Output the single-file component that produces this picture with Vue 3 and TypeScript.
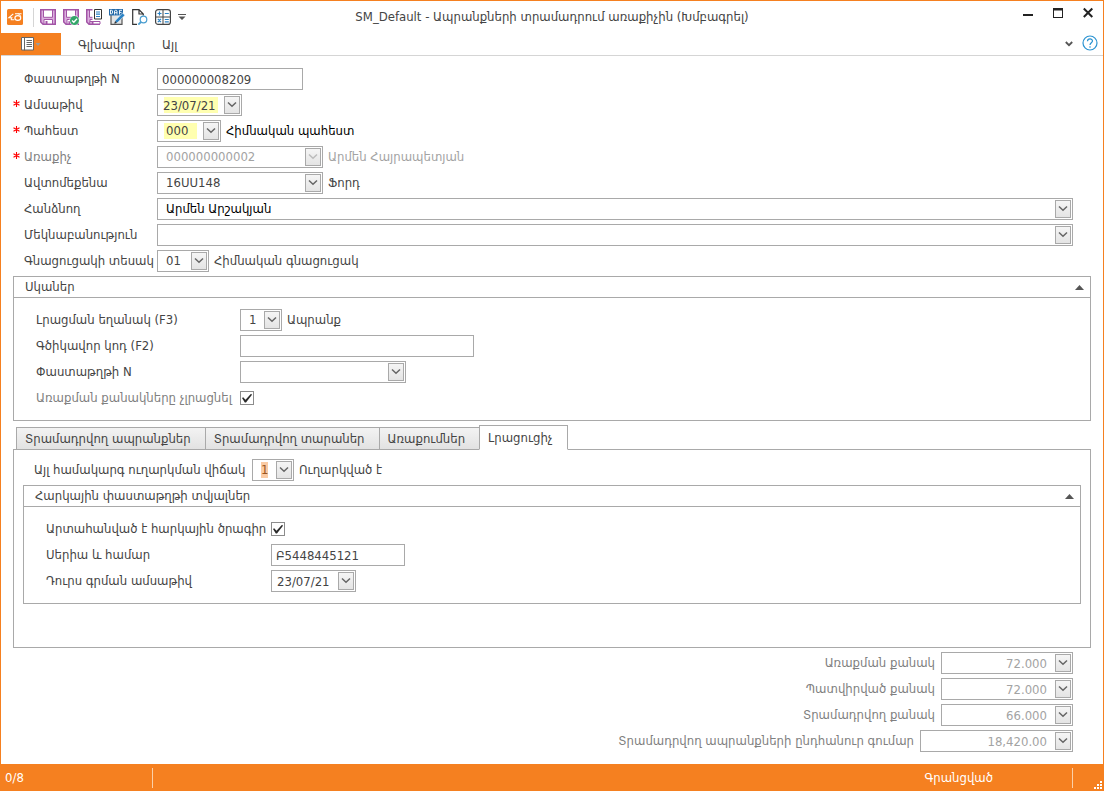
<script setup lang="ts">
import { ref } from 'vue'

type Kind = 'text' | 'date' | 'select' | 'check'

interface Field {
  id: string
  label: string
  kind: Kind
  value: string
  size: string
  note?: string
  required?: boolean
  disabled?: boolean
  marked?: boolean
  strong?: boolean
}

interface Total {
  id: string
  label: string
  value: string
  size: string
}

const mainFields: Field[] = [
  { id: 'doc', label: 'Փաստաթղթի N', kind: 'text', value: '000000008209', size: 'doc' },
  { id: 'date', label: 'Ամսաթիվ', kind: 'date', value: '23/07/21', size: 'date', required: true, marked: true },
  { id: 'store', label: 'Պահեստ', kind: 'select', value: '000', size: 'store', note: 'Հիմնական պահեստ', required: true, marked: true, strong: true },
  { id: 'carrier', label: 'Առաքիչ', kind: 'select', value: '000000000002', size: 'code', note: 'Արմեն Հայրապետյան', required: true, disabled: true },
  { id: 'car', label: 'Ավտոմեքենա', kind: 'select', value: '16ՍՍ148', size: 'code', note: 'Ֆորդ' },
  { id: 'giver', label: 'Հանձնող', kind: 'select', value: 'Արմեն Արշակյան', size: 'wide', strong: true },
  { id: 'comment', label: 'Մեկնաբանություն', kind: 'select', value: '', size: 'wide' },
  { id: 'price', label: 'Գնացուցակի տեսակ', kind: 'select', value: '01', size: 'price', note: 'Հիմնական գնացուցակ' },
]

const scanFields: Field[] = [
  { id: 'fill', label: 'Լրացման եղանակ (F3)', kind: 'select', value: '1', size: 'digit', note: 'Ապրանք' },
  { id: 'barcode', label: 'Գծիկավոր կոդ (F2)', kind: 'text', value: '', size: 'barcode' },
  { id: 'scandoc', label: 'Փաստաթղթի N', kind: 'select', value: '', size: 'code' },
  { id: 'nofill', label: 'Առաքման քանակները չլրացնել', kind: 'check', value: '', size: 'check', disabled: true },
]

const taxFields: Field[] = [
  { id: 'exported', label: 'Արտահանված է հարկային ծրագիր', kind: 'check', value: '', size: 'check' },
  { id: 'serial', label: 'Սերիա և համար', kind: 'text', value: 'Բ5448445121', size: 'serial' },
  { id: 'taxdate', label: 'Դուրս գրման ամսաթիվ', kind: 'date', value: '23/07/21', size: 'date' },
]

const totals: Total[] = [
  { id: 'shipped', label: 'Առաքման քանակ', value: '72.000', size: 'qty' },
  { id: 'ordered', label: 'Պատվիրված քանակ', value: '72.000', size: 'qty' },
  { id: 'given', label: 'Տրամադրվող քանակ', value: '66.000', size: 'qty' },
  { id: 'sum', label: 'Տրամադրվող ապրանքների ընդհանուր գումար', value: '18,420.00', size: 'sum' },
]

const tabs = ['Տրամադրվող ապրանքներ', 'Տրամադրվող տարաներ', 'Առաքումներ', 'Լրացուցիչ']
const activeTab = ref(3)
</script>

<template>
  <div class="window">
    <svg class="defs" aria-hidden="true">
      <symbol id="chevron" viewBox="0 0 14 16">
        <path d="M3 5.500 7 9.300 11 5.500" fill="none" stroke="currentColor" stroke-width="1.500" />
      </symbol>
      <symbol id="floppy" viewBox="0 0 16 16">
        <path d="M.75.75h14.500v14.500H3L.75 13z" fill="#dcb0df" stroke="#a254a6" stroke-width="1.500" />
        <path d="M3.500 1h9v7.300h-9z" fill="#fff" stroke="#a254a6" />
        <path d="M4 10.500h8.500V15H4z" fill="#fff" stroke="#a254a6" />
        <path d="M5.500 12h2v3h-2z" fill="#a254a6" />
      </symbol>
    </svg>

    <header class="titlebar">
      <div class="tools">
        <svg class="logo" viewBox="0 0 16 16" aria-hidden="true">
          <rect width="16" height="16" rx="1.500" fill="#f58020" />
          <path d="M6.300 4.800 1.800 8.800H5.500M4.300 8.800v2h3M8 4.800h6.500" fill="none" stroke="#fff" stroke-width="1.100" />
          <ellipse cx="10.800" cy="9" rx="2.900" ry="2.300" fill="none" stroke="#fff" stroke-width="1.200" />
          <path d="M10.800 4.800c1.500.2 2.600 1.200 3 2.700" fill="none" stroke="#fff" stroke-width=".8" />
        </svg>
        <span class="rule"></span>
        <button type="button" class="tool" aria-label="Save">
          <svg viewBox="0 0 16 16"><use href="#floppy" /></svg>
        </button>
        <button type="button" class="tool" aria-label="Save and confirm">
          <svg viewBox="0 0 16 16">
            <use href="#floppy" />
            <circle cx="11.500" cy="11.500" r="5" fill="#fff" />
            <circle cx="11.500" cy="11.500" r="4.500" fill="#35a56a" />
            <path d="m9 11.500 1.800 1.800 3.200-3.600" fill="none" stroke="#fff" stroke-width="1.300" />
          </svg>
        </button>
        <button type="button" class="tool" aria-label="Save as document">
          <svg viewBox="0 0 16 16">
            <use href="#floppy" />
            <path d="M6.500 0H16v16h-2v-4H6.500z" fill="#fff" />
            <path d="M8.500.500h7v9.500h-7z" fill="#fff" stroke="#333" />
            <path d="M10 3h4M10 5.200h4M10 7.500h4" stroke="#2b82c4" stroke-width="1.200" />
            <path d="M4 12.500h10V15H4z" fill="#fff" stroke="#a254a6" />
            <path d="M5.500 12.500h2V15h-2z" fill="#a254a6" />
          </svg>
        </button>
        <button type="button" class="tool" aria-label="Edit DAF">
          <svg viewBox="0 0 16 16">
            <path d="M2 6v9.300h11V8" fill="#e4e4e4" stroke="#555" stroke-width="1.200" />
            <path d="M0 0h14v6.500H0z" fill="#2469a8" />
            <path d="M1.500 1v4h1l1-1V2l-1-1zM5.500 5.500V2l.8-.8h1L8 2v3.500M5.500 3.700H8M10.500 5.500V1.300H13M10.500 3.400h2" fill="none" stroke="#fff" stroke-width=".9" />
            <path d="m5.500 14.500 1-3.200L13.500 4 16 6.300 8.700 13.500z" fill="#2b82c4" stroke="#fff" stroke-width=".6" />
            <path d="m5.200 14.800.9-2.800 1.900 1.900z" fill="#333" />
          </svg>
        </button>
        <button type="button" class="tool" aria-label="Preview">
          <svg viewBox="0 0 16 16">
            <path d="M5 15.300H.7V.7H7l4.300 4.300v1.500M7 .7V5h4.300" fill="none" stroke="#333" stroke-width="1.200" />
            <circle cx="11.500" cy="10.500" r="3.300" fill="#fff" stroke="#4a9ed0" stroke-width="1.200" />
            <path d="m9 13-2.700 2.600" stroke="#4a9ed0" stroke-width="1.800" />
          </svg>
        </button>
        <button type="button" class="tool" aria-label="Calculator">
          <svg viewBox="0 0 16 16">
            <rect x=".6" y=".6" width="14.800" height="14.800" rx="2.500" fill="#fff" stroke="#444" stroke-width="1.200" />
            <path d="M8 1v14M1 8h14" stroke="#444" />
            <path d="M2.500 4.500h4M4.500 2.500v4M9.800 4.500h4M2.800 9.800l3.200 3.400M6 9.800l-3.200 3.400M9.800 10.500h4M9.800 12.800h4" stroke="#2b82c4" stroke-width="1.200" />
          </svg>
        </button>
        <button type="button" class="tool more" aria-label="Customize">
          <svg viewBox="0 0 8 6"><path d="M0 0h8v1H0zM.500 2.500h7L4 6z" fill="#555" /></svg>
        </button>
      </div>
      <h1 class="title">SM_Default - Ապրանքների տրամադրում առաքիչին (Խմբագրել)</h1>
      <div class="caption">
        <button type="button" aria-label="Minimize">
          <svg viewBox="0 0 12 12"><path d="M1 7h10v2H1z" fill="#222" /></svg>
        </button>
        <button type="button" aria-label="Maximize">
          <svg viewBox="0 0 12 12"><path d="M1 1h10v10H1zM2 3.500V10h8V3.500z" fill="#222" fill-rule="evenodd" /></svg>
        </button>
        <button type="button" aria-label="Close">
          <svg viewBox="0 0 12 12"><path d="m1.800 1.500 8.500 8.500M10.300 1.500 1.800 10" stroke="#222" stroke-width="2" /></svg>
        </button>
      </div>
    </header>

    <nav class="ribbon">
      <button type="button" class="app-menu" aria-label="Menu">
        <svg viewBox="0 0 20 14">
          <path d="M.5.5h12v12.500H.5z" fill="#fff" stroke="#666" />
          <path d="M3.500 0v13.500" stroke="#666" />
          <path d="M5.500 3.500h5.500M5.500 5.500h5.500M5.500 7.500h5.500M5.500 9.500h5.500" stroke="#666" />
          <path d="M14.500 6h5l-2.500 3z" fill="#9c9c9c" />
        </svg>
      </button>
      <a class="ribbon-link" href="#main">Գլխավոր</a>
      <a class="ribbon-link" href="#other">Այլ</a>
      <button type="button" class="collapse" aria-label="Collapse ribbon">
        <svg viewBox="0 0 8 8"><path d="M.8 2 4 5.200 7.200 2" fill="none" stroke="#555" stroke-width="1.800" /></svg>
      </button>
      <button type="button" class="help" aria-label="Help">
        <svg viewBox="0 0 16 16">
          <circle cx="8" cy="8" r="7" fill="none" stroke="#2b93d1" stroke-width="1.200" />
          <path d="M5.500 6.200C5.500 3.200 10.500 3.200 10.500 6c0 1.700-2.500 1.900-2.500 4M8 11.300v1.500" fill="none" stroke="#2b93d1" stroke-width="1.200" />
        </svg>
      </button>
    </nav>

    <main class="body">
      <section class="rows main-rows">
        <div v-for="f in mainFields" :key="f.id" class="row" :class="{ disabled: f.disabled, strong: f.strong }">
          <span class="star">
            <svg v-if="f.required" viewBox="0 0 7 7"><path d="M3.500 0v7M.5 1.700l6 3.600M6.500 1.700l-6 3.600" stroke="#f00" stroke-width="1.100" /></svg>
          </span>
          <label class="label" :for="f.id">{{ f.label }}</label>
          <div class="box" :class="[f.size, f.kind]">
            <select v-if="f.kind === 'select'" :id="f.id" :class="{ marked: f.marked }" :disabled="f.disabled">
              <option>{{ f.value }}</option>
            </select>
            <input v-else :id="f.id" type="text" :class="{ marked: f.marked }" :value="f.value" />
            <span v-if="f.kind === 'select'" class="arrow"><svg><use href="#chevron" /></svg></span>
            <button v-if="f.kind === 'date'" type="button" class="arrow" aria-label="Open calendar"><svg><use href="#chevron" /></svg></button>
          </div>
          <span v-if="f.note" class="note">{{ f.note }}</span>
        </div>
      </section>

      <section class="group scanner">
        <h2 class="group-head">
          <span>Սկաներ</span>
          <svg viewBox="0 0 9 5"><path d="M0 5 4.500 0 9 5z" fill="#555" /></svg>
        </h2>
        <div class="rows scan-rows">
          <div v-for="f in scanFields" :key="f.id" class="row" :class="{ disabled: f.disabled }">
            <label class="label" :for="f.id">{{ f.label }}</label>
            <input v-if="f.kind === 'check'" :id="f.id" type="checkbox" class="tick" checked />
            <div v-else class="box" :class="[f.size, f.kind]">
              <select v-if="f.kind === 'select'" :id="f.id">
                <option>{{ f.value }}</option>
              </select>
              <input v-else :id="f.id" type="text" :value="f.value" />
              <span v-if="f.kind === 'select'" class="arrow"><svg><use href="#chevron" /></svg></span>
            </div>
            <span v-if="f.note" class="note">{{ f.note }}</span>
          </div>
        </div>
      </section>

      <div class="tabs" role="tablist">
        <button
          v-for="(tab, i) in tabs"
          :key="tab"
          type="button"
          role="tab"
          class="tab"
          :class="{ active: i === activeTab }"
          :aria-selected="i === activeTab"
          @click="activeTab = i"
        >
          {{ tab }}
        </button>
      </div>

      <section class="tab-panel">
        <div class="row state-row">
          <label class="label" for="state">Այլ համակարգ ուղարկման վիճակ</label>
          <div class="box digit select">
            <select id="state" class="picked">
              <option>1</option>
            </select>
            <span class="arrow"><svg><use href="#chevron" /></svg></span>
          </div>
          <span class="note">Ուղարկված է</span>
        </div>
        <div class="group tax">
          <h2 class="group-head">
            <span>Հարկային փաստաթղթի տվյալներ</span>
            <svg viewBox="0 0 9 5"><path d="M0 5 4.500 0 9 5z" fill="#555" /></svg>
          </h2>
          <div class="rows tax-rows">
            <div v-for="f in taxFields" :key="f.id" class="row">
              <label class="label" :for="f.id">{{ f.label }}</label>
              <input v-if="f.kind === 'check'" :id="f.id" type="checkbox" class="tick" checked />
              <div v-else class="box" :class="[f.size, f.kind]">
                <input :id="f.id" type="text" :value="f.value" />
                <button v-if="f.kind === 'date'" type="button" class="arrow" aria-label="Open calendar"><svg><use href="#chevron" /></svg></button>
              </div>
            </div>
          </div>
        </div>
      </section>

      <section class="rows totals">
        <div v-for="t in totals" :key="t.id" class="row disabled">
          <label class="label" :for="t.id">{{ t.label }}</label>
          <div class="box amount" :class="t.size">
            <input :id="t.id" type="text" :value="t.value" readonly />
            <button type="button" class="arrow" aria-label="Open calculator"><svg><use href="#chevron" /></svg></button>
          </div>
        </div>
      </section>
    </main>

    <footer class="status">
      <span class="count">0/8</span>
      <span class="state">Գրանցված</span>
      <span class="corner">
        <svg viewBox="0 0 8 8"><path d="M6 0h2v2H6zM3 3h2v2H3zM6 3h2v2H6zM0 6h2v2H0zM3 6h2v2H3zM6 6h2v2H6z" fill="#fff" /></svg>
      </span>
    </footer>
  </div>
</template>

<style>
body {
  margin: 0;
}
</style>

<style scoped>
.window {
  --line: #a9a9a9;
  --orange: #f58020;
  box-sizing: border-box;
  min-height: 100vh;
  display: flex;
  flex-direction: column;
  border: 1px solid var(--orange);
  border-bottom: 0;
  background: #fff;
  color: #444;
  font-family: "DejaVu Sans Condensed", "DejaVu Sans", sans-serif;
  font-size: 13px;
  line-height: 16px;
}
.window *,
.window *::before {
  box-sizing: border-box;
}
.defs {
  position: absolute;
  width: 0;
  height: 0;
}
button,
input,
select {
  margin: 0;
  padding: 0;
  border: 0;
  border-radius: 0;
  background: none;
  color: inherit;
  font: inherit;
  appearance: none;
}
svg {
  display: block;
}
.titlebar {
  display: grid;
  grid-template-columns: 1fr auto 1fr;
  align-items: center;
  height: 32px;
}
.tools {
  display: flex;
  align-items: center;
  gap: 7px;
  padding-left: 6px;
}
.logo,
.tool svg {
  width: 16px;
  height: 16px;
}
.rule {
  width: 1px;
  height: 19px;
  margin: 0 -1px 0 3px;
  background: #d5d5d5;
}
.tool.more svg {
  width: 8px;
  height: 6px;
}
.title {
  margin: 0;
  font-size: 13px;
  font-weight: 400;
}
.caption {
  display: flex;
  justify-content: flex-end;
  gap: 18px;
  padding: 0 9px 8px 0;
}
.caption svg {
  width: 12px;
  height: 12px;
}
.ribbon {
  display: flex;
  align-items: center;
  height: 23px;
  border-bottom: 1px solid #d5d5d5;
}
.app-menu {
  width: 60px;
  height: 22px;
  margin-right: 17px;
  padding-left: 20px;
  background: var(--orange);
}
.app-menu svg {
  width: 20px;
  height: 14px;
}
.ribbon-link {
  margin-right: 27px;
  padding-top: 2px;
  color: inherit;
  text-decoration: none;
}
.collapse {
  margin: 0 9px 0 auto;
}
.collapse svg {
  width: 8px;
  height: 8px;
}
.help {
  margin: -3px 5px 0 0;
}
.help svg {
  width: 16px;
  height: 16px;
}
.body {
  flex: 1;
  padding: 12px;
}
.rows {
  display: flex;
  flex-direction: column;
  gap: 4px;
}
.row {
  display: flex;
  align-items: center;
  min-height: 22px;
}
.main-rows {
  padding-right: 18px;
}
.star {
  width: 11px;
  padding-bottom: 3px;
}
.star svg {
  width: 7px;
  height: 7px;
}
.label {
  white-space: nowrap;
}
.main-rows .label {
  width: 133px;
}
.disabled .label {
  color: #808080;
}
.note {
  margin-left: 5px;
  white-space: nowrap;
}
.strong .note,
.strong .wide select {
  color: #000;
}
.disabled .note,
.disabled .select,
.disabled .amount input {
  color: #a3a3a3;
}
.box {
  position: relative;
  height: 22px;
  border: 1px solid var(--line);
  background: #fff;
}
.box input,
.box select {
  display: block;
  width: 100%;
  height: 20px;
  padding: 0 4px;
  outline: 0;
  opacity: 1;
}
.box.date input {
  padding: 0 23px 0 5px;
}
.box.select select {
  padding: 0 20px 0 8px;
}
.box.amount input {
  padding: 0 25px 0 4px;
  text-align: right;
}
.marked {
  background: linear-gradient(#ffffb0, #ffffb0) 6px 2px / calc(100% - 29px) 16px no-repeat;
}
.picked {
  color: #9a5520;
  background: linear-gradient(#facba4, #facba4) 8px 2px / 7px 16px no-repeat;
}
.doc { width: 146px; }
.date { width: 85px; }
.store { width: 64px; }
.code { width: 166px; }
.wide { flex: 1; }
.price { width: 52px; }
.digit { width: 42px; }
.barcode { width: 234px; }
.serial { width: 134px; }
.qty { width: 132px; }
.sum { width: 153px; }
.arrow {
  position: absolute;
  top: 1px;
  right: 1px;
  width: 16px;
  height: 18px;
  border: 1px solid var(--line);
  background: linear-gradient(#f5f5f5, #e4e4e4);
  color: #666;
}
.arrow svg {
  width: 14px;
  height: 16px;
}
span.arrow {
  pointer-events: none;
}
.disabled span.arrow {
  color: #bcbcbc;
}
.group {
  border: 1px solid var(--line);
}
.scanner {
  min-height: 145px;
  margin-top: 4px;
}
.group-head {
  display: flex;
  justify-content: space-between;
  align-items: center;
  height: 21px;
  margin: 0;
  padding: 0 6px 0 11px;
  border-bottom: 1px solid var(--line);
  font-size: 13px;
  font-weight: 400;
}
.group-head svg {
  width: 9px;
  height: 5px;
}
.scan-rows {
  padding: 11px 22px;
}
.scan-rows .label {
  width: 204px;
}
.tick {
  display: grid;
  place-items: center;
  width: 14px;
  height: 14px;
  border: 1px solid #8c8c8c;
  background: #fff;
}
.box + .tick,
.label + .tick {
  flex: none;
}
.tick:checked::before {
  content: "";
  width: 10px;
  height: 10px;
  background: #2b2b2b;
  clip-path: polygon(0 50%, 12% 42%, 35% 68%, 90% 8%, 100% 18%, 40% 95%, 28% 95%);
}
.tabs {
  display: flex;
  align-items: flex-end;
  height: 25px;
  margin: 4px 0 -1px 3px;
  position: relative;
}
.tab {
  height: 23px;
  margin-right: -1px;
  padding: 0 14px 0 8px;
  border: 1px solid var(--line);
  background: linear-gradient(#f3f3f3, #e2e2e2);
  white-space: nowrap;
}
.tab.active {
  height: 25px;
  border-bottom-color: #fff;
  background: #fff;
}
.tab-panel {
  min-height: 199px;
  padding: 9px;
  border: 1px solid var(--line);
}
.state-row {
  padding-left: 11px;
}
.state-row .label {
  width: 218px;
}
.tax {
  min-height: 119px;
  margin-top: 4px;
}
.tax-rows {
  padding: 11px 22px;
}
.tax-rows .label {
  width: 225px;
}
.totals {
  padding: 4px 18px 0 0;
}
.totals .row {
  justify-content: flex-end;
  gap: 6px;
}
.status {
  display: flex;
  align-items: center;
  height: 27px;
  margin: 0 -1px;
  background: var(--orange);
  color: #fff;
}
.count {
  width: 153px;
  height: 20px;
  padding: 2px 5px;
  border-right: 1px solid #fbd0a8;
}
.state {
  flex: 1;
  height: 20px;
  padding: 2px 79px 2px 0;
  border-right: 1px solid #fbd0a8;
  text-align: right;
}
.corner {
  align-self: flex-end;
  width: 31px;
  padding: 0 2px 2px 0;
}
.corner svg {
  width: 8px;
  height: 8px;
  margin-left: auto;
}
</style>
